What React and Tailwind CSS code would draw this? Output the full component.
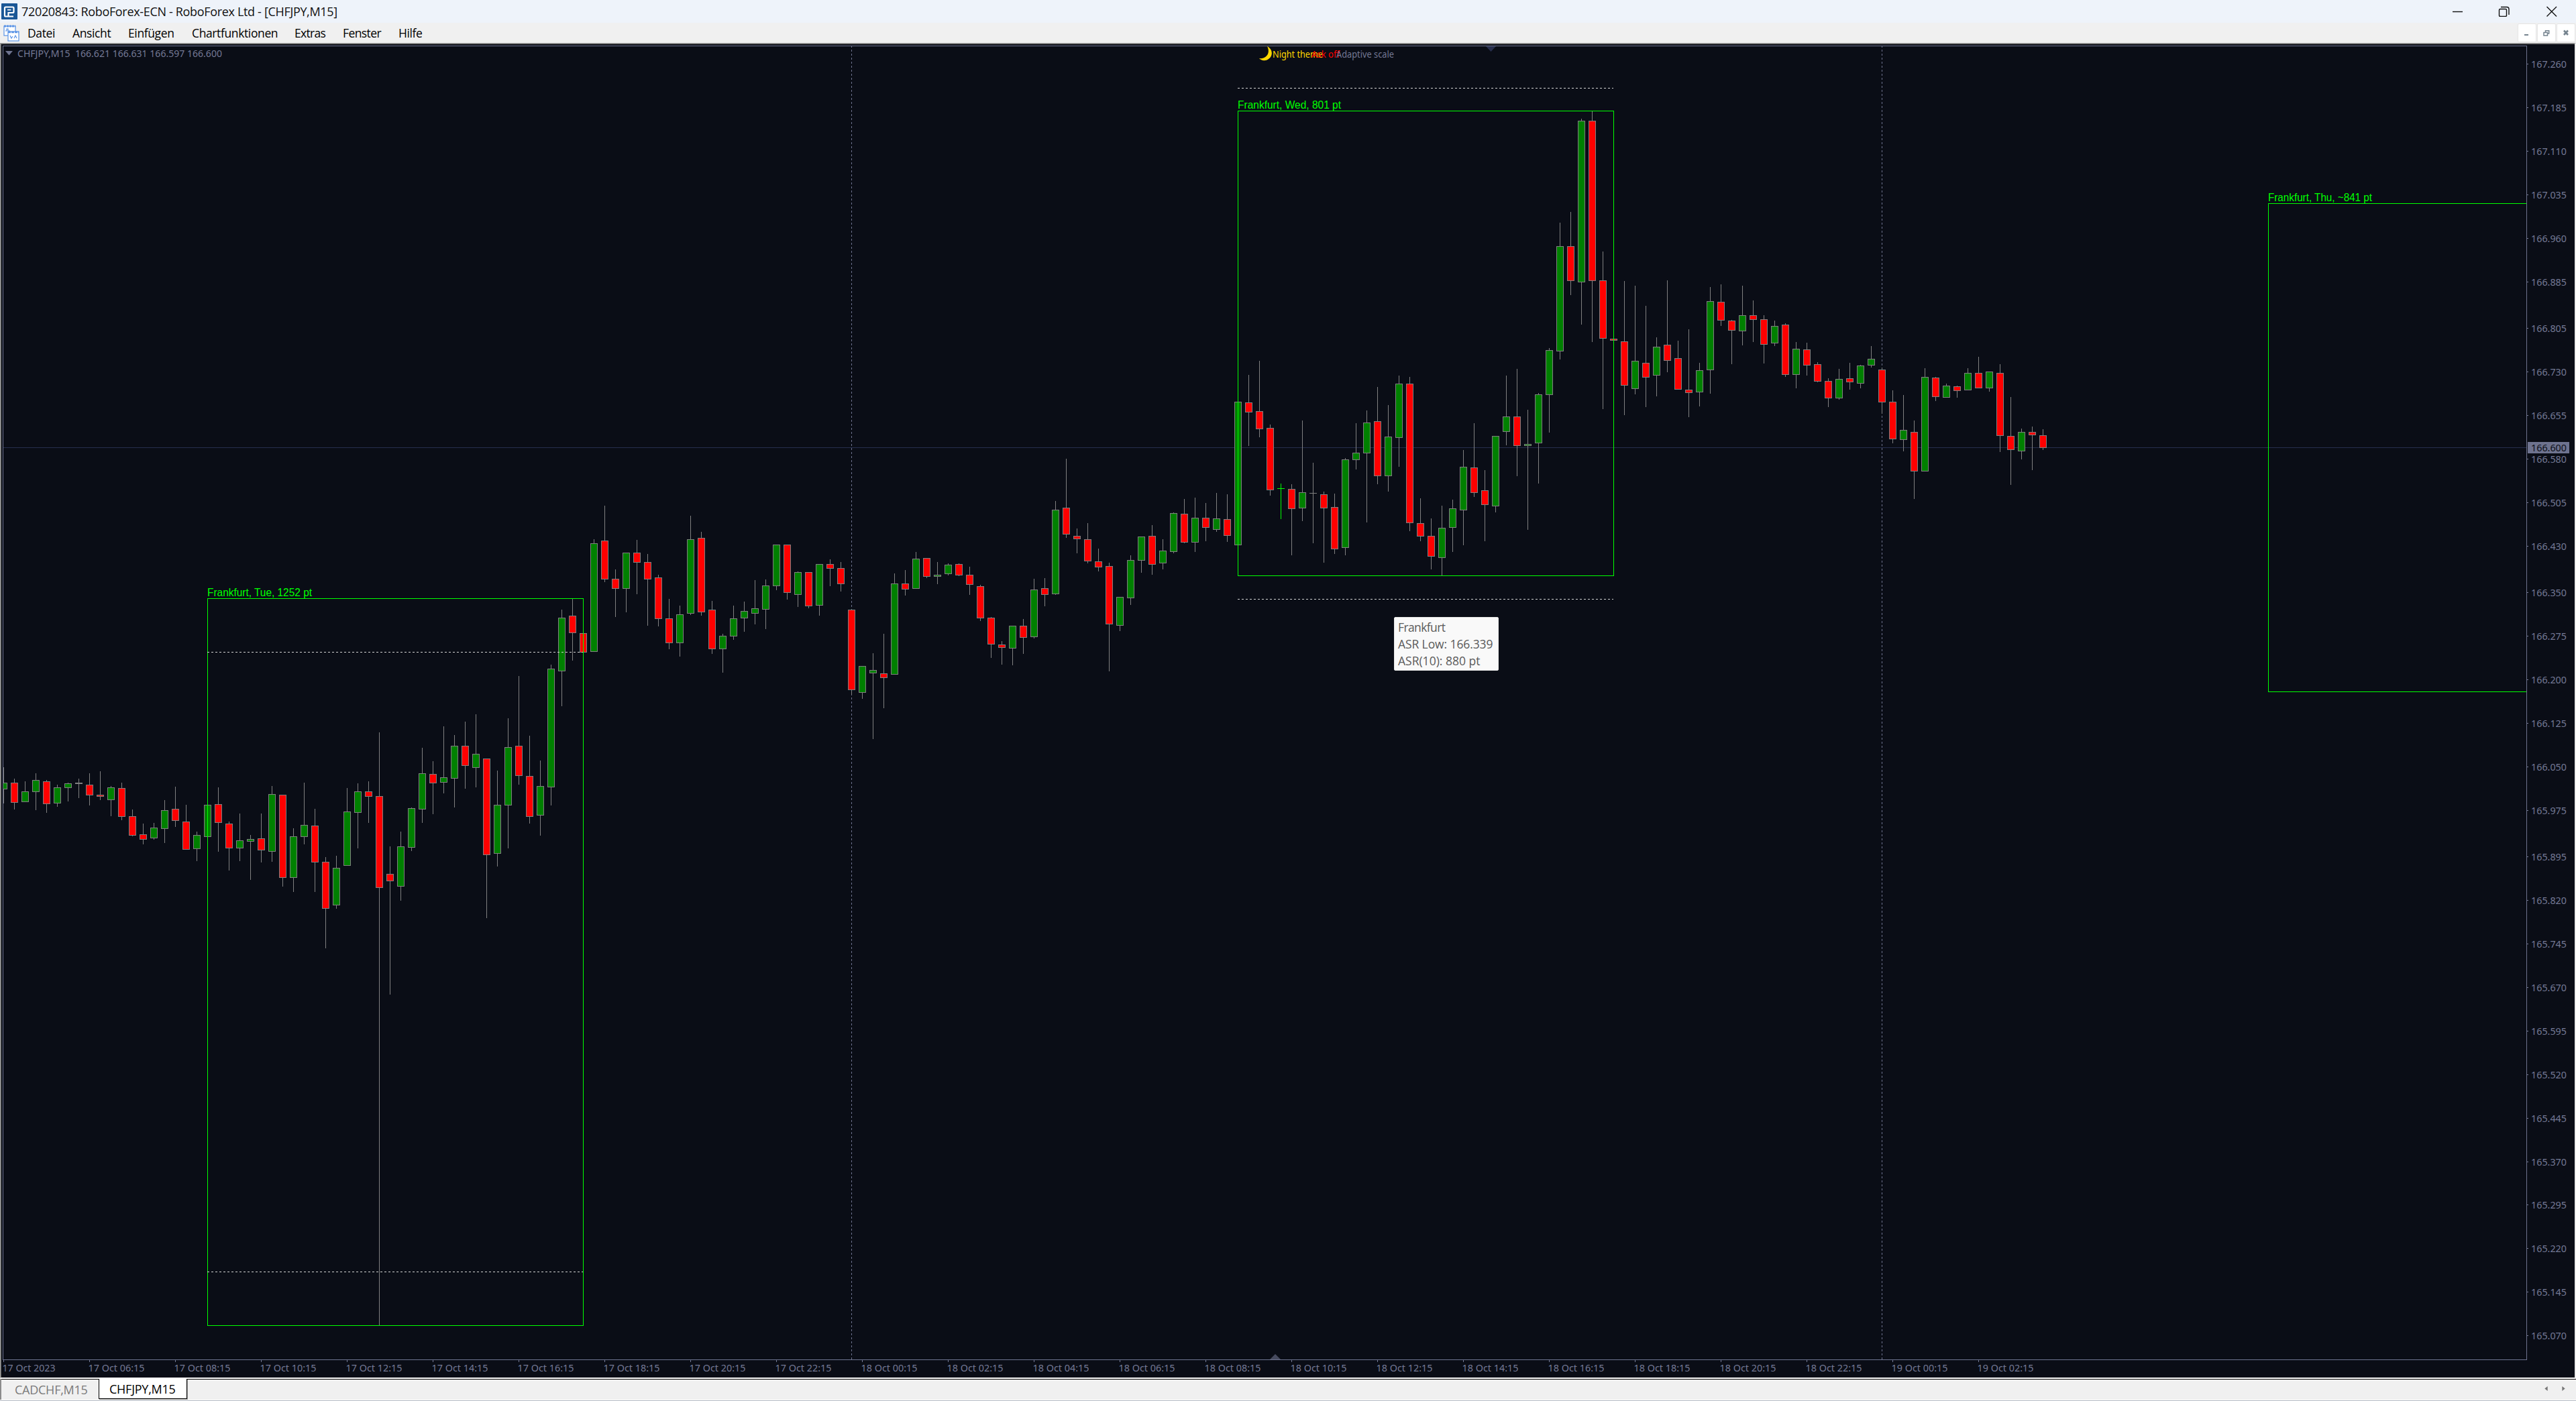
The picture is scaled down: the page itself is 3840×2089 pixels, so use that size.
const BULL = "#008000";
const BEAR = "#ff0000";
const FRAME = "#6e738f";
const CHART_FONT = '"Noto Sans", "Open Sans", sans-serif';

// Each candle: [direction, high, body top, body bottom, low]; one column every 16px.
const CANDLES = [
  ["g", 1144, 1167, 1177, 1198], ["r", 1161, 1167, 1197, 1207], ["g", 1165, 1180, 1196, 1196], ["g", 1153, 1163, 1181, 1208],
  ["r", 1163, 1165, 1199, 1212], ["g", 1170, 1174, 1198, 1203], ["g", 1167, 1168, 1175, 1195], ["n", 1161, 1167, 1169, 1190],
  ["r", 1153, 1170, 1186, 1201], ["r", 1150, 1185, 1188, 1193], ["g", 1172, 1174, 1193, 1217], ["r", 1167, 1175, 1218, 1223],
  ["r", 1207, 1217, 1246, 1247], ["r", 1228, 1244, 1252, 1259], ["g", 1227, 1234, 1250, 1252], ["g", 1193, 1208, 1236, 1257],
  ["r", 1173, 1206, 1224, 1233], ["r", 1200, 1225, 1267, 1267], ["g", 1240, 1245, 1266, 1284], ["g", 1200, 1200, 1248, 1248],
  ["r", 1174, 1199, 1227, 1270], ["r", 1225, 1228, 1265, 1298], ["g", 1213, 1253, 1265, 1284], ["g", 1245, 1251, 1255, 1312],
  ["r", 1213, 1250, 1268, 1286], ["g", 1172, 1184, 1270, 1285], ["r", 1185, 1185, 1309, 1322], ["g", 1235, 1247, 1309, 1330],
  ["g", 1167, 1230, 1248, 1259], ["r", 1206, 1231, 1286, 1330], ["r", 1278, 1285, 1355, 1414], ["g", 1276, 1294, 1350, 1355],
  ["g", 1175, 1210, 1291, 1291], ["g", 1168, 1180, 1212, 1265], ["r", 1165, 1180, 1188, 1227], ["r", 1092, 1187, 1324, 1976],
  ["r", 1262, 1303, 1314, 1483], ["g", 1240, 1262, 1322, 1343], ["g", 1204, 1205, 1264, 1269], ["g", 1115, 1153, 1207, 1227],
  ["r", 1135, 1154, 1168, 1214], ["g", 1083, 1159, 1167, 1183], ["g", 1096, 1112, 1161, 1204], ["r", 1076, 1112, 1142, 1176],
  ["g", 1065, 1124, 1145, 1174], ["r", 1131, 1131, 1275, 1369], ["g", 1149, 1200, 1273, 1292], ["g", 1071, 1114, 1201, 1265],
  ["r", 1008, 1112, 1157, 1170], ["r", 1097, 1157, 1218, 1228], ["g", 1134, 1172, 1216, 1246], ["g", 991, 997, 1174, 1201],
  ["g", 909, 921, 1001, 1053], ["r", 893, 918, 944, 985], ["r", 944, 944, 973, 973], ["g", 804, 810, 972, 972],
  ["r", 754, 806, 864, 868], ["r", 849, 863, 878, 920], ["g", 824, 824, 878, 913], ["r", 805, 824, 839, 886],
  ["r", 826, 838, 864, 933], ["r", 857, 861, 923, 934], ["r", 893, 922, 959, 968], ["g", 903, 916, 959, 979],
  ["g", 769, 804, 915, 917], ["r", 793, 802, 913, 918], ["r", 896, 909, 968, 975], ["g", 945, 948, 968, 1003],
  ["g", 903, 922, 949, 954], ["g", 897, 911, 922, 942], ["g", 865, 907, 915, 931], ["g", 864, 873, 909, 938],
  ["g", 812, 812, 874, 880], ["r", 812, 812, 884, 894], ["g", 852, 853, 887, 905], ["r", 853, 853, 904, 907],
  ["g", 841, 841, 903, 918], ["r", 834, 841, 848, 874], ["r", 838, 847, 871, 882], ["r", 908, 909, 1029, 1036],
  ["g", 993, 993, 1033, 1042], ["g", 974, 999, 1004, 1102], ["r", 945, 1004, 1011, 1056], ["g", 855, 870, 1006, 1006],
  ["r", 850, 870, 879, 888], ["g", 823, 833, 878, 878], ["r", 832, 832, 860, 862], ["g", 838, 857, 860, 871],
  ["g", 840, 842, 856, 858], ["r", 840, 841, 858, 859], ["r", 845, 857, 872, 887], ["r", 872, 874, 922, 926],
  ["r", 920, 921, 961, 981], ["r", 956, 961, 966, 991], ["g", 933, 933, 967, 992], ["r", 923, 933, 951, 975],
  ["g", 863, 879, 950, 952], ["r", 862, 877, 887, 904], ["g", 747, 760, 886, 887], ["r", 684, 757, 797, 802],
  ["r", 788, 799, 804, 825], ["r", 780, 804, 837, 840], ["r", 818, 837, 846, 852], ["r", 839, 844, 931, 1001],
  ["g", 890, 890, 933, 941], ["g", 828, 835, 892, 902], ["g", 800, 800, 836, 854], ["r", 783, 799, 842, 857],
  ["g", 804, 821, 840, 849], ["g", 764, 765, 823, 825], ["r", 744, 766, 809, 810], ["g", 742, 772, 809, 823],
  ["r", 750, 772, 787, 807], ["g", 735, 773, 790, 793], ["r", 737, 774, 799, 808], ["g", 599, 599, 813, 813],
  ["r", 559, 600, 615, 665], ["r", 538, 613, 640, 652], ["r", 633, 638, 731, 739], ["l", 721, 728, 729, 774],
  ["r", 722, 729, 759, 828], ["g", 627, 734, 758, 777], ["n", 690, 735, 736, 810], ["r", 733, 737, 758, 839],
  ["r", 736, 756, 819, 826], ["g", 683, 685, 817, 828], ["g", 631, 675, 686, 700], ["g", 612, 630, 676, 779],
  ["r", 577, 628, 710, 722], ["g", 604, 651, 710, 733], ["g", 560, 572, 653, 696], ["r", 562, 572, 780, 792],
  ["r", 743, 780, 800, 807], ["r", 773, 799, 830, 849], ["g", 754, 787, 832, 858], ["g", 745, 758, 787, 823],
  ["g", 671, 696, 761, 813], ["r", 631, 697, 735, 741], ["r", 701, 731, 753, 807], ["g", 650, 650, 755, 764],
  ["g", 560, 621, 644, 664], ["r", 550, 621, 665, 710], ["g", 611, 662, 665, 790], ["g", 586, 588, 661, 721],
  ["g", 519, 522, 589, 645], ["g", 332, 367, 524, 536], ["r", 316, 367, 419, 440], ["g", 177, 180, 421, 484],
  ["r", 166, 180, 419, 510], ["r", 375, 418, 505, 610], ["r", 505, 505, 508, 508], ["r", 419, 509, 575, 619],
  ["g", 426, 538, 580, 588], ["r", 456, 541, 563, 607], ["g", 503, 517, 560, 591], ["r", 418, 514, 538, 555],
  ["r", 508, 534, 581, 581], ["r", 491, 581, 586, 622], ["g", 541, 552, 585, 606], ["g", 428, 449, 552, 587],
  ["r", 424, 450, 478, 486], ["r", 477, 478, 493, 543], ["g", 426, 470, 494, 515], ["r", 448, 470, 477, 510],
  ["r", 470, 476, 514, 542], ["g", 478, 486, 512, 516], ["r", 482, 484, 559, 562], ["g", 510, 520, 559, 579],
  ["r", 511, 521, 545, 560], ["r", 540, 543, 569, 570], ["r", 564, 568, 594, 607], ["g", 550, 565, 594, 596],
  ["r", 541, 564, 570, 581], ["g", 544, 545, 572, 579], ["g", 516, 535, 545, 548], ["r", 548, 551, 600, 617],
  ["r", 582, 599, 655, 661], ["g", 589, 641, 656, 673], ["r", 627, 644, 703, 744], ["g", 549, 562, 703, 703],
  ["r", 562, 563, 592, 598], ["g", 572, 575, 593, 593], ["r", 575, 576, 583, 593], ["g", 549, 556, 582, 582],
  ["r", 532, 556, 579, 579], ["g", 554, 554, 579, 584], ["r", 543, 556, 650, 674], ["r", 592, 650, 671, 723],
  ["g", 639, 644, 673, 685], ["r", 636, 644, 649, 701], ["r", 640, 649, 668, 671],
];

const PRICES = [
  "167.260", "167.185", "167.110", "167.035", "166.960", "166.885", "166.805", "166.730", "166.655", "166.580",
  "166.505", "166.430", "166.350", "166.275", "166.200", "166.125", "166.050", "165.975", "165.895", "165.820",
  "165.745", "165.670", "165.595", "165.520", "165.445", "165.370", "165.295", "165.220", "165.145", "165.070",
];

const TIMES = [
  "17 Oct 2023", "17 Oct 06:15", "17 Oct 08:15", "17 Oct 10:15", "17 Oct 12:15", "17 Oct 14:15", "17 Oct 16:15",
  "17 Oct 18:15", "17 Oct 20:15", "17 Oct 22:15", "18 Oct 00:15", "18 Oct 02:15", "18 Oct 04:15", "18 Oct 06:15",
  "18 Oct 08:15", "18 Oct 10:15", "18 Oct 12:15", "18 Oct 14:15", "18 Oct 16:15", "18 Oct 18:15", "18 Oct 20:15",
  "18 Oct 22:15", "19 Oct 00:15", "19 Oct 02:15",
];

const priceY = (p) => Math.round(95 + (167.26 - Number(p)) * 865.9);

function Candle({ data, index }) {
  const [dir, high, top, bottom, low] = data;
  const x = index * 16;
  const line = dir === "l" ? "#00ff00" : "#808080";
  return (
    <g>
      <rect x={x + 5} y={high} width={1} height={low - high} fill={line} />
      <rect x={x} y={top} width={11} height={bottom - top} fill={line} />
      {bottom - top > 2 && (
        <rect x={x + 1} y={top + 1} width={9} height={bottom - top - 2} fill={dir === "g" ? BULL : BEAR} />
      )}
    </g>
  );
}

function SessionBox({ x, y, right, bottom, label, labelWidth }) {
  return (
    <g>
      <path
        d={right ? `M${x + 0.5} ${y + 0.5}H${right + 0.5}V${bottom + 0.5}H${x + 0.5}Z` : `M3766 ${y + 0.5}H${x + 0.5}V${bottom + 0.5}H3766`}
        fill="none"
        stroke="#00ff00"
      />
      <text x={x} y={y - 3} fill="#00ff00" fontSize={16.5} fontFamily='"Liberation Sans", Arial, sans-serif' textLength={labelWidth} lengthAdjust="spacingAndGlyphs">
        {label}
      </text>
    </g>
  );
}

function DashLine({ x, y, to }) {
  return <path d={`M${x} ${y + 0.5}H${to}`} stroke="#d3d3d3" strokeDasharray="3 3" />;
}

function Chart() {
  return (
    <svg className="block h-[1988px] w-[3836px]" viewBox="2 66 3836 1988" shapeRendering="crispEdges">
      <defs>
        <clipPath id="plot">
          <rect x={5} y={69} width={3761} height={1958} />
        </clipPath>
      </defs>

      <path d="M1269.5 68V2027M2805.5 68V2027" stroke={FRAME} strokeDasharray="3 3" />
      <rect x={5} y={667} width={3761} height={1} fill="#272e4d" />

      <g clipPath="url(#plot)">
        {CANDLES.map((c, i) => (
          <Candle key={i} data={c} index={i} />
        ))}
      </g>

      <SessionBox x={309} y={892} right={869} bottom={1976} label="Frankfurt, Tue, 1252 pt" labelWidth={156} />
      <SessionBox x={1845} y={165} right={2405} bottom={858} label="Frankfurt, Wed, 801 pt" labelWidth={154} />
      <SessionBox x={3381} y={303} bottom={1031} label="Frankfurt, Thu, ~841 pt" labelWidth={155} />
      <DashLine x={309} y={972} to={869} />
      <DashLine x={309} y={1896} to={869} />
      <DashLine x={1845} y={131} to={2405} />
      <DashLine x={1845} y={893} to={2405} />

      <rect x={4.5} y={68.5} width={3762} height={1959} fill="none" stroke={FRAME} />
      <path d="M2215 69H2230L2222.5 77Z" fill="#272e4d" shapeRendering="geometricPrecision" />
      <path d="M1893 2027H1909L1901 2019Z" fill={FRAME} fillOpacity={0.6} shapeRendering="geometricPrecision" />
      <path d="M8 76H19L13.5 82.5Z" fill={FRAME} shapeRendering="geometricPrecision" />

      <g fontFamily={CHART_FONT} fontSize={14.5} fill="#747995">
        <text x={26} y={85} textLength={305} lengthAdjust="spacingAndGlyphs" xmlSpace="preserve">
          {"CHFJPY,M15\u00a0 166.621 166.631 166.597 166.600"}
        </text>

        <path
          d="M1889 69C1897 73 1898.5 83 1891 88C1886.500 91.500 1880 90.500 1877 87C1884 88 1889 84 1890.500 79C1891.500 75 1890.500 72 1889 69Z"
          fill="#ffd700"
          shapeRendering="geometricPrecision"
        />
        <text x={1897} y={86} fill="#ffd700" textLength={75} lengthAdjust="spacingAndGlyphs">Night theme</text>
        <text x={1955} y={86} fill="#ff0000" textLength={42} lengthAdjust="spacingAndGlyphs">Ask off</text>
        <text x={1992} y={86} textLength={86} lengthAdjust="spacingAndGlyphs">Adaptive scale</text>

        {PRICES.map((p) => (
          <g key={p}>
            <rect x={3767} y={priceY(p)} width={2} height={1} />
            <text x={3773} y={priceY(p) + 6} textLength={53} lengthAdjust="spacingAndGlyphs">{p}</text>
          </g>
        ))}
        <rect x={3768} y={659} width={62} height={17} fill={FRAME} />
        <text x={3773} y={673} fill="#0b0d16" textLength={53} lengthAdjust="spacingAndGlyphs">166.600</text>

        {TIMES.map((t, i) => (
          <g key={t}>
            <rect x={5 + i * 128} y={2028} width={1} height={3} />
            <text x={3.5 + i * 128} y={2045} textLength={i ? 84 : 79} lengthAdjust="spacingAndGlyphs">{t}</text>
          </g>
        ))}
      </g>
    </svg>
  );
}

function TitleBar() {
  return (
    <header className="flex h-[34px] items-center bg-[#eef3fa] pl-[2px]">
      <svg className="h-6 w-6" viewBox="0 0 24 24">
        <rect width="24" height="24" rx="1" fill="#1a5796" />
        <g fill="none" stroke="#fff" strokeWidth="2.200">
          <path d="M10 19.500H6.500Q5 19.500 5 18V7Q5 5.500 6.500 5.500H17Q18.500 5.500 18.500 7V12.500Q18.500 14 17 14H10.500V18.500Q10.500 19.500 11.500 19.500H18" />
          <path d="M9 9.700H14.500" strokeWidth="1.600" />
        </g>
      </svg>
      <h1 className="ml-[6px] w-[3622px] text-[18px] leading-[34px] tracking-[-0.33px] whitespace-nowrap text-[#101010]">
        72020843: RoboForex-ECN - RoboForex Ltd - [CHFJPY,M15]
      </h1>
      <svg className="h-[16px] w-[160px]" viewBox="0 0 160 16" fill="none" stroke="#111" strokeWidth="1.400">
        <path d="M2 8.500H17" />
        <rect x="71.500" y="4.500" width="11" height="11" rx="1.500" />
        <path d="M74 1.500H83Q86 1.500 86 4.500V13" />
        <path d="M142.500 1L157 15.500M157 1L142.500 15.500" />
      </svg>
    </header>
  );
}

function MdiButton({ children }) {
  return (
    <span className="flex h-[28px] w-[28px] items-center justify-center rounded-[2px] border border-[#e6e6e6] bg-white">
      <svg className="h-[26px] w-[26px]" viewBox="0 0 26 26" fill="none" stroke="#76848f" strokeWidth="1.500">
        {children}
      </svg>
    </span>
  );
}

function MenuBar() {
  return (
    <nav className="flex h-[30px] items-center bg-[#f0f0f0] pl-1 text-[17.500px] tracking-[-0.38px] whitespace-nowrap text-black">
      <svg className="h-[26px] w-[26px] shrink-0" viewBox="0 0 26 26" fill="#fff" stroke="#5b94e6" strokeWidth="1.200">
        <rect x="2" y="3" width="17" height="14" />
        <path d="M2 3H19" strokeWidth="3" strokeDasharray="3 1" />
        <path d="M4 10H6V7H8V10H11" fill="none" />
        <rect x="8" y="11" width="16" height="14" />
        <path d="M8 12H24" strokeWidth="2.500" strokeDasharray="4 1" />
        <path d="M11 17L13 21L15 18M17 21L19 17L21 21" fill="none" />
      </svg>
      <span className="ml-[11px] w-[67px]">Datei</span>
      <span className="w-[83px]">Ansicht</span>
      <span className="w-[95px]">Einfügen</span>
      <span className="w-[153px]">Chartfunktionen</span>
      <span className="w-[72px] tracking-[-0.7px]">Extras</span>
      <span className="w-[83px] tracking-[-0.6px]">Fenster</span>
      <span>Hilfe</span>
      <div className="ml-auto flex gap-px pr-px">
        <MdiButton>
          <path d="M9 16H15" strokeWidth="2" />
        </MdiButton>
        <MdiButton>
          <rect x="9" y="12.500" width="5.500" height="4.500" />
          <path d="M11.500 12V9.700H16.700V14H15" />
        </MdiButton>
        <MdiButton>
          <path d="M10 9.500L16 16M16 9.500L10 16" strokeWidth="2.600" />
        </MdiButton>
      </div>
    </nav>
  );
}

function ChartTabs() {
  return (
    <footer className="flex h-[33px] flex-col">
      <div className="flex h-[31px] border-l-2 border-[#8c8c8c] bg-[#f0f0f0] text-[18px] leading-[30px] whitespace-nowrap">
        <span className="w-[145px] border-t border-black pl-[20px] tracking-[-0.25px] text-[#7a7a7a]">CADCHF,M15</span>
        <span className="h-[30px] w-[132px] border-x border-b border-black bg-white pl-[15px] tracking-[-0.25px] text-black shadow-[1px_1px_0_#a0a0a0]">
          CHFJPY,M15
        </span>
        <div className="flex grow items-center justify-end gap-[21px] border-t border-black pr-[16px] pb-[4px]">
          <svg className="h-[7px] w-[5px]" viewBox="0 0 5 8" fill="#777"><path d="M5 0V8L0 4Z" /></svg>
          <svg className="h-[7px] w-[5px]" viewBox="0 0 5 8" fill="#777"><path d="M0 0V8L5 4Z" /></svg>
        </div>
      </div>
      <div className="h-px bg-white" />
      <div className="h-px bg-[#b4b9c2]" />
    </footer>
  );
}

export default function App() {
  return (
    <div className="flex h-[2089px] w-[3840px] flex-col overflow-hidden bg-[#f0f0f0] font-['Open_Sans','Noto_Sans',sans-serif]">
      <TitleBar />
      <MenuBar />
      <main className="relative h-[1992px] border-t border-l border-t-[#a0a0a0] border-l-[#a0a0a0] border-r-2 border-r-[#ececec] border-b-2 border-b-white bg-[#0a0d16]">
        <div className="border-t border-l border-[#696969]">
          <Chart />
        </div>
        <div className="absolute top-[855px] left-[2077px] h-[80px] w-[156px] rounded-[2px] border border-[#e8e8e8] bg-[#f9f9f9] pt-[2px] pl-[5px] text-[17.500px] leading-[25px] whitespace-nowrap text-[#5b5b5b]">
          <p className="tracking-[-0.6px]">Frankfurt</p>
          <p className="tracking-[-0.1px]">ASR Low: 166.339</p>
          <p>ASR(10): 880 pt</p>
        </div>
      </main>
      <ChartTabs />
    </div>
  );
}
